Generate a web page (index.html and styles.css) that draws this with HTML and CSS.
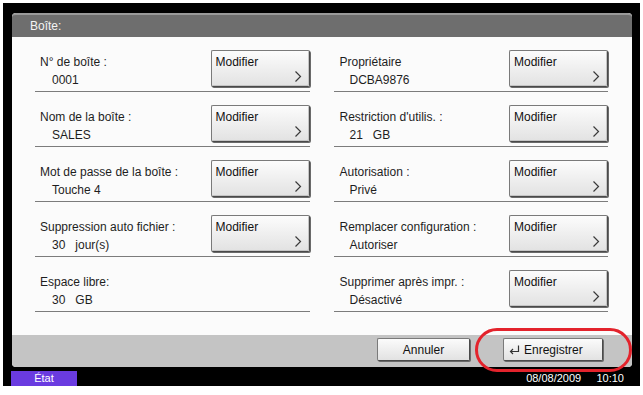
FILE: index.html
```html
<!DOCTYPE html>
<html lang="fr">
<head>
    <meta charset="UTF-8">
    <meta name="viewport" content="width=device-width, initial-scale=1.0">
    <title>Boîte</title>
    <link rel="stylesheet" href="styles.css">
</head>
<body>
    <div class="screen">
        <div class="panel">
            <div class="panel-title">Boîte:</div>
            <div class="panel-body">
                <div class="column left-column">
                    <div class="row">
                        <div class="row-text">
                            <div class="row-label">N° de boîte :</div>
                            <div class="row-value">0001</div>
                        </div>
                        <button class="modify-btn"><span>Modifier</span><svg class="chevron" width="8" height="11" viewBox="0 0 8 11"><polyline points="1.5,0.5 6.5,5.5 1.5,10.5" fill="none" stroke="#3a3a3a" stroke-width="1.2"/></svg></button>
                    </div>
                    <div class="row">
                        <div class="row-text">
                            <div class="row-label">Nom de la boîte :</div>
                            <div class="row-value">SALES</div>
                        </div>
                        <button class="modify-btn"><span>Modifier</span><svg class="chevron" width="8" height="11" viewBox="0 0 8 11"><polyline points="1.5,0.5 6.5,5.5 1.5,10.5" fill="none" stroke="#3a3a3a" stroke-width="1.2"/></svg></button>
                    </div>
                    <div class="row">
                        <div class="row-text">
                            <div class="row-label">Mot de passe de la boîte :</div>
                            <div class="row-value">Touche 4</div>
                        </div>
                        <button class="modify-btn"><span>Modifier</span><svg class="chevron" width="8" height="11" viewBox="0 0 8 11"><polyline points="1.5,0.5 6.5,5.5 1.5,10.5" fill="none" stroke="#3a3a3a" stroke-width="1.2"/></svg></button>
                    </div>
                    <div class="row">
                        <div class="row-text">
                            <div class="row-label">Suppression auto fichier :</div>
                            <div class="row-value">30   jour(s)</div>
                        </div>
                        <button class="modify-btn"><span>Modifier</span><svg class="chevron" width="8" height="11" viewBox="0 0 8 11"><polyline points="1.5,0.5 6.5,5.5 1.5,10.5" fill="none" stroke="#3a3a3a" stroke-width="1.2"/></svg></button>
                    </div>
                    <div class="row">
                        <div class="row-text">
                            <div class="row-label">Espace libre:</div>
                            <div class="row-value">30   GB</div>
                        </div>
                    </div>
                </div>
                <div class="column right-column">
                    <div class="row">
                        <div class="row-text">
                            <div class="row-label">Propriétaire</div>
                            <div class="row-value">DCBA9876</div>
                        </div>
                        <button class="modify-btn"><span>Modifier</span><svg class="chevron" width="8" height="11" viewBox="0 0 8 11"><polyline points="1.5,0.5 6.5,5.5 1.5,10.5" fill="none" stroke="#3a3a3a" stroke-width="1.2"/></svg></button>
                    </div>
                    <div class="row">
                        <div class="row-text">
                            <div class="row-label">Restriction d'utilis. :</div>
                            <div class="row-value">21   GB</div>
                        </div>
                        <button class="modify-btn"><span>Modifier</span><svg class="chevron" width="8" height="11" viewBox="0 0 8 11"><polyline points="1.5,0.5 6.5,5.5 1.5,10.5" fill="none" stroke="#3a3a3a" stroke-width="1.2"/></svg></button>
                    </div>
                    <div class="row">
                        <div class="row-text">
                            <div class="row-label">Autorisation :</div>
                            <div class="row-value">Privé</div>
                        </div>
                        <button class="modify-btn"><span>Modifier</span><svg class="chevron" width="8" height="11" viewBox="0 0 8 11"><polyline points="1.5,0.5 6.5,5.5 1.5,10.5" fill="none" stroke="#3a3a3a" stroke-width="1.2"/></svg></button>
                    </div>
                    <div class="row">
                        <div class="row-text">
                            <div class="row-label">Remplacer configuration :</div>
                            <div class="row-value">Autoriser</div>
                        </div>
                        <button class="modify-btn"><span>Modifier</span><svg class="chevron" width="8" height="11" viewBox="0 0 8 11"><polyline points="1.5,0.5 6.5,5.5 1.5,10.5" fill="none" stroke="#3a3a3a" stroke-width="1.2"/></svg></button>
                    </div>
                    <div class="row">
                        <div class="row-text">
                            <div class="row-label">Supprimer après impr. :</div>
                            <div class="row-value">Désactivé</div>
                        </div>
                        <button class="modify-btn"><span>Modifier</span><svg class="chevron" width="8" height="11" viewBox="0 0 8 11"><polyline points="1.5,0.5 6.5,5.5 1.5,10.5" fill="none" stroke="#3a3a3a" stroke-width="1.2"/></svg></button>
                    </div>
                </div>
            </div>
            <div class="panel-footer">
                <button class="footer-btn cancel-btn">Annuler</button>
                <button class="footer-btn save-btn">
                    <svg class="return-icon" width="11" height="10" viewBox="0 0 11 10"><path d="M9.5 0.5 V6.5 H1.5 M4 4 L1.5 6.5 L4 9" fill="none" stroke="#333" stroke-width="1.2"/></svg>
                    Enregistrer
                </button>
                <div class="highlight"></div>
            </div>
        </div>
        <div class="status-bar">
            <span class="status-tab">État</span>
            <span class="status-time">08/08/2009&nbsp;&nbsp;&nbsp;&nbsp;&nbsp;10:10</span>
        </div>
    </div>
</body>
</html>
```

FILE: styles.css
```css
body {
    margin: 0;
    background-color: #ffffff;
    font-family: "Liberation Sans", Arial, sans-serif;
    font-size: 12px;
    color: #1e1e1e;
}
.screen {
    margin: 3px 3px 0 3px;
    height: 383px;
    box-sizing: border-box;
    padding: 10px 8px 0 9px;
    background-color: #000000;
    display: flex;
    flex-direction: column;
}
.panel {
    position: relative;
    height: 354px;
    display: flex;
    flex-direction: column;
    background-color: #fbfbfb;
    border-radius: 4px;
}
.panel::before {
    content: "";
    position: absolute;
    left: -5px;
    top: 0;
    width: 68px;
    height: 44px;
    background-color: #6a6a6a;
    border-radius: 3px;
    z-index: -1;
}
.panel-title {
    height: 22px;
    line-height: 22px;
    padding-left: 18px;
    color: #f4f4f4;
    background-color: #6e6e6e;
    border-top: 2px solid #9a9a9a;
    border-radius: 4px 4px 0 0;
}
.panel-body {
    flex-grow: 1;
    display: flex;
    gap: 24px;
    padding: 0 24px 0 23px;
}
.column {
    flex: 1;
}
.row {
    height: 55px;
    box-sizing: border-box;
    display: flex;
    align-items: flex-start;
    border-bottom: 1px solid #7c7c7c;
}
.row-text {
    flex-grow: 1;
    padding-top: 18px;
    padding-left: 5px;
}
.right-column .row-text {
    padding-left: 6px;
}
.row-label {
    line-height: 14px;
}
.row-value {
    margin-top: 4px;
    padding-left: 12px;
    line-height: 14px;
    white-space: pre;
}
.right-column .row-value {
    padding-left: 10px;
}
.modify-btn {
    margin-top: 13px;
    width: 99px;
    height: 37px;
    box-sizing: border-box;
    padding: 4px 7px 4px 4px;
    display: flex;
    flex-direction: column;
    justify-content: space-between;
    align-items: flex-start;
    font-family: inherit;
    font-size: 12px;
    color: #111111;
    text-align: left;
    background: linear-gradient(#fcfcfc, #e2e2e2);
    border: 1px solid #7a7a7a;
    border-right-color: #4a4a4a;
    border-bottom-color: #4a4a4a;
    border-radius: 2px;
    box-shadow: 1px 1px 0 #6a6a6a, inset -1px -1px 0 #c4c4c4;
}
.chevron {
    align-self: flex-end;
}
.panel-footer {
    position: relative;
    height: 32px;
    box-sizing: border-box;
    padding: 3px 29px 0 0;
    display: flex;
    justify-content: flex-end;
    align-items: flex-start;
    gap: 33px;
    background-color: #c4c4c4;
    border-radius: 0 0 4px 4px;
}
.footer-btn {
    height: 23px;
    box-sizing: border-box;
    font-family: inherit;
    font-size: 12px;
    color: #111111;
    background: linear-gradient(#fbfbfb, #e2e2e2);
    border: 1px solid #7a7a7a;
    border-right-color: #4a4a4a;
    border-bottom-color: #4a4a4a;
    border-radius: 2px;
    box-shadow: 1px 1px 0 #6a6a6a;
    display: flex;
    align-items: center;
    justify-content: center;
}
.cancel-btn {
    width: 93px;
}
.save-btn {
    width: 100px;
    justify-content: flex-start;
    padding-left: 5px;
    gap: 4px;
}
.highlight {
    position: absolute;
    left: 463px;
    top: -7px;
    width: 157px;
    height: 44px;
    box-sizing: border-box;
    border: 3px solid #e3232c;
    border-radius: 22px;
    pointer-events: none;
}
.status-bar {
    margin-top: 3px;
    height: 16px;
    display: flex;
    justify-content: space-between;
    align-items: center;
    font-size: 11px;
    color: #ffffff;
}
.status-tab {
    width: 66px;
    height: 15px;
    line-height: 15px;
    margin-left: -1px;
    text-align: center;
    background-color: #6a3be0;
}
.status-time {
    padding-right: 8px;
}
```
